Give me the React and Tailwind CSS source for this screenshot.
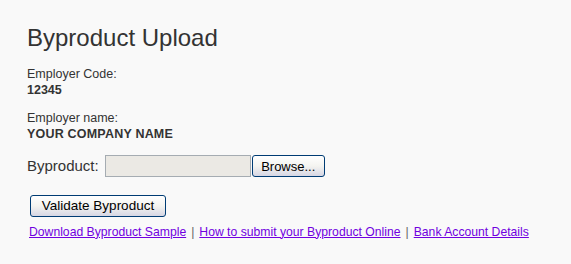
export default function App() {
  return (
    <div className="min-h-[264px] w-[571px] bg-[#f9f9f9] text-[#333333] font-['Liberation_Sans',Arial,sans-serif]">
      <div className="pl-[27px] pt-[26px]">
        <h1 className="text-[24px] leading-[24px] font-normal text-[#333333]">Byproduct Upload</h1>

        <div className="mt-[16px] text-[12.5px] leading-[16px]">
          <div>Employer Code:</div>
          <div className="font-bold">12345</div>
        </div>

        <div className="mt-[12px] text-[12.5px] leading-[16px]">
          <div>Employer name:</div>
          <div className="font-bold tracking-[0.2px]">YOUR COMPANY NAME</div>
        </div>

        <div className="mt-[13px] flex items-center">
          <span className="text-[15px] mr-[6px]">Byproduct:</span>
          <div className="h-[22px] w-[146px] bg-[#ebe9e4] border border-[#a5acb2]" />
          <button className="ml-[1px] h-[22px] w-[73px] rounded-[3px] border border-[#003c74] bg-gradient-to-b from-white via-[#f4f4f0] to-[#d6d6e4] text-[13px] text-black">
            Browse...
          </button>
        </div>

        <div className="mt-[15px] pl-[3px]">
          <button className="h-[22px] w-[136px] rounded-[3px] border border-[#003c74] bg-gradient-to-b from-white via-[#f4f4f0] to-[#d6d6e4] text-[13.5px] text-black">
            Validate Byproduct
          </button>
        </div>

        <div className="mt-[6px] pl-[2px] text-[12.2px] text-[#7000e0]">
          <a href="#" className="underline">Download Byproduct Sample</a>
          <span className="text-[#666666] mx-[5px]">|</span>
          <a href="#" className="underline">How to submit your Byproduct Online</a>
          <span className="text-[#666666] mx-[5px]">|</span>
          <a href="#" className="underline">Bank Account Details</a>
        </div>
      </div>
    </div>
  )
}
